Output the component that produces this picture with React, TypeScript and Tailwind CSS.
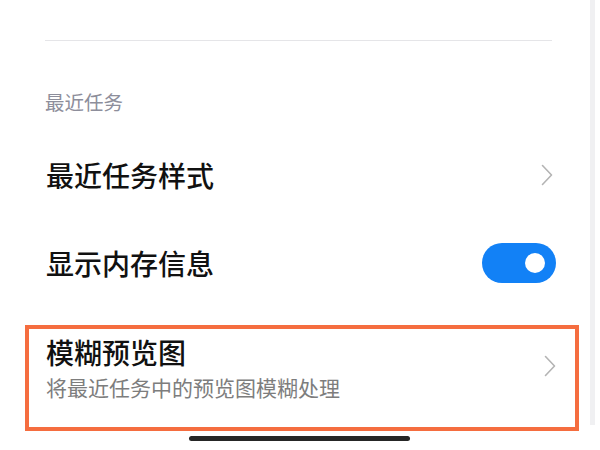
import { memo } from 'react';

const FONT = { fontFamily: '"Noto Sans CJK SC", "Noto Sans", sans-serif' };

function Chevron() {
  return (
    <svg width="12" height="22" viewBox="0 0 12 22" fill="none">
      <polyline
        points="1.5,1.5 10.5,11 1.5,20.5"
        stroke="#b4b4b4"
        strokeWidth="1.6"
        strokeLinecap="round"
        strokeLinejoin="round"
      />
    </svg>
  );
}

function Toggle() {
  return (
    <div className="w-[74px] h-[40px] rounded-full bg-[#1281f6] flex items-center justify-end pr-[11px]">
      <div className="w-[20px] h-[20px] rounded-full bg-white" />
    </div>
  );
}

function App() {
  return (
    <div className="w-[600px] h-[450px] overflow-hidden bg-white flex" style={FONT}>
      <div className="w-[590px] h-full flex flex-col">
        <div className="pt-[40px] px-[45px]">
          <div className="h-px w-[507px] bg-[#e5e5e8]" />
        </div>

        <div className="mt-[47px] px-[45px] text-[19.5px] leading-[28px] text-[#8d8e9b]">
          最近任务
        </div>

        <div className="mt-[15px] h-[88px] pl-[46px] pr-[37px] flex items-center justify-between">
          <span className="text-[28px] leading-[36px] font-medium text-[#111]">
            最近任务样式
          </span>
          <Chevron />
        </div>

        <div className="h-[88px] pl-[46px] pr-[34px] flex items-center justify-between">
          <span className="text-[28px] leading-[36px] font-medium text-[#111]">
            显示内存信息
          </span>
          <Toggle />
        </div>

        <div className="mt-[18px] ml-[25px] w-[554px] h-[106px] border-[4px] border-[#f56d3f] flex items-center justify-between pl-[17px] pr-[19px]">
          <div className="flex flex-col pt-[1px] pb-[22px]">
            <span className="text-[28px] leading-[36px] font-medium text-[#111]">
              模糊预览图
            </span>
            <span className="mt-[3px] text-[21px] leading-[28px] text-[#7d7d7d]">
              将最近任务中的预览图模糊处理
            </span>
          </div>
          <div className="mb-[24px] flex">
            <Chevron />
          </div>
        </div>

        <div className="mt-[5px] pl-[189px]">
          <div className="w-[221px] h-[5px] rounded-full bg-[#262626]" />
        </div>
      </div>
      <div className="w-[5px] h-[425px] bg-[#f0f0f2]" />
    </div>
  );
}

App.displayName = 'App';
export default memo(App);
